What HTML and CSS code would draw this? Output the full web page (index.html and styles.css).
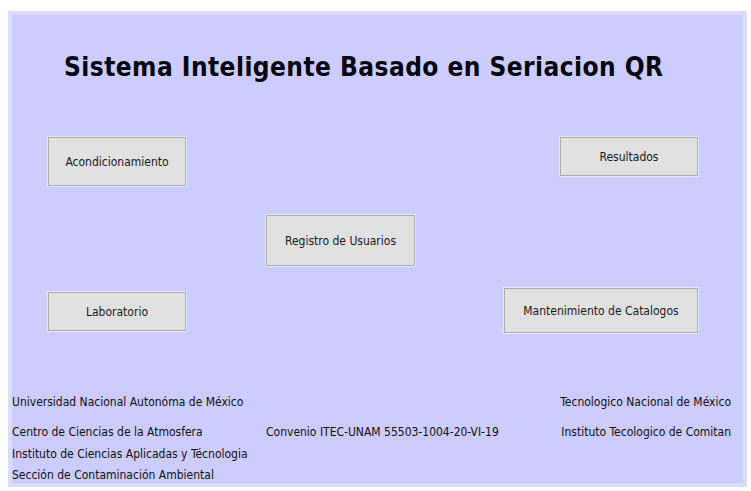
FILE: index.html
```html
<!DOCTYPE html>
<html lang="es">
<head>
<meta charset="utf-8">
<title>Sistema Inteligente Basado en Seriacion QR</title>
<link rel="stylesheet" href="styles.css">
</head>
<body>
<div class="frame">
  <div class="panel">
    <h1 class="title">Sistema Inteligente Basado en Seriacion QR</h1>
    <div class="menu">
      <button class="btn b-acond">Acondicionamiento</button>
      <button class="btn b-result">Resultados</button>
      <button class="btn b-registro">Registro de Usuarios</button>
      <button class="btn b-lab">Laboratorio</button>
      <button class="btn b-mant">Mantenimiento de Catalogos</button>
    </div>
    <div class="footer">
      <div class="f-left f-r1">Universidad Nacional Autonóma de México</div>
      <div class="f-right f-r1">Tecnologico Nacional de México</div>
      <div class="f-left f-r2">Centro de Ciencias de la Atmosfera</div>
      <div class="f-mid f-r2">Convenio ITEC-UNAM 55503-1004-20-VI-19</div>
      <div class="f-right f-r2">Instituto Tecologico de Comitan</div>
      <div class="f-left f-r3">Instituto de Ciencias Aplicadas y Técnologia</div>
      <div class="f-left f-r4">Sección de Contaminación Ambiental</div>
    </div>
  </div>
</div>
</body>
</html>
```
FILE: styles.css
```css
html, body {
  margin: 0;
  padding: 0;
  background: #ffffff;
}
body {
  font-family: "DejaVu Sans Condensed", "DejaVu Sans", sans-serif;
  font-stretch: condensed;
  color: #000;
}
.frame {
  margin: 11px 4px 0 8px;
  width: 739px;
  height: 476px;
  box-sizing: border-box;
  border: 4px solid #dcdcfc;
  background: #ccccff;
  overflow: hidden;
}
.panel {
  height: 100%;
  display: flex;
  flex-direction: column;
}
.title {
  margin: 34px 0 0 52px;
  font-size: 26px;
  letter-spacing: 0.45px;
  line-height: 36px;
  font-weight: bold;
  color: #05050f;
  white-space: nowrap;
}
.menu {
  margin-top: 52px;
  display: grid;
  grid-template-columns: 138px 80px 149px 89px 194px;
  grid-template-rows: 49px 29px 51px 22px 45px;
  padding-left: 36px;
}
.btn {
  font-family: inherit;
  font-stretch: condensed;
  font-size: 12px;
  color: #1a1a1a;
  background: #e1e1e1;
  border: 1px solid #adadad;
  box-shadow: 0 0 0 1px #e6e6fb;
  padding: 0;
  margin: 0;
  cursor: default;
}
.b-acond { grid-column: 1; grid-row: 1; height: 49px; }
.b-result { grid-column: 5; grid-row: 1; width: 138px; height: 39px; justify-self: end; }
.b-registro { grid-column: 3; grid-row: 3; height: 51px; }
.b-lab { grid-column: 1; grid-row: 5; height: 39px; margin-top: 4px; }
.b-mant { grid-column: 5; grid-row: 5; height: 45px; }
.footer {
  margin-top: 61px;
  display: grid;
  grid-template-columns: 254px 1fr auto;
  grid-template-rows: 30px 22px 21px 21px;
  font-size: 12px;
  line-height: 16px;
  color: #111;
  padding-right: 12px;
}
.f-left { grid-column: 1; white-space: nowrap; }
.f-mid { grid-column: 2; white-space: nowrap; }
.f-right { grid-column: 3; justify-self: end; white-space: nowrap; }
.f-r1 { grid-row: 1; }
.f-r2 { grid-row: 2; }
.f-r3 { grid-row: 3; }
.f-r4 { grid-row: 4; }
```
